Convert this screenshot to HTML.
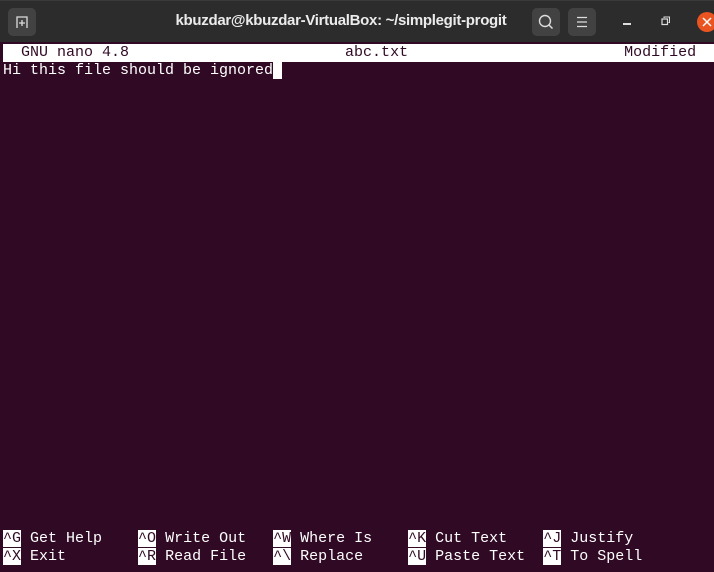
<!DOCTYPE html>
<html><head><style>
html,body{margin:0;padding:0;width:714px;height:572px;overflow:hidden;background:#300a24}
.hdr{position:absolute;left:0;top:0;width:714px;height:42px;background:#2c2c2c;border-top:1px solid #3a3a3a;box-sizing:border-box}
.btn{position:absolute;top:7px;width:28px;height:28px;background:#424242;border-radius:5px}
.title{position:absolute;top:11px;left:168px;width:346px;text-align:center;font:bold 15px "Liberation Sans",sans-serif;color:#ececec;letter-spacing:-0.3px;white-space:nowrap}
.t{position:absolute;font:15px/18px "Liberation Mono",monospace;white-space:pre;color:#fff}
.bar{position:absolute;left:3px;top:44px;width:711px;height:18px;background:#fff;color:#300a24}
.k{background:#fff;color:#300a24}
</style></head><body>
<div class="hdr">
<div class="btn" style="left:8px"><svg width="28" height="28" viewBox="0 0 28 28"><path d="M9 20V9h10v11" fill="none" stroke="#ddd" stroke-width="1.3"/><path d="M14 12v6M11 15h6" stroke="#ddd" stroke-width="1.3"/></svg></div>
<div class="title">kbuzdar@kbuzdar-VirtualBox: ~/simplegit-progit</div>
<div class="btn" style="left:532px"><svg width="28" height="28" viewBox="0 0 28 28"><circle cx="13" cy="13" r="5.5" fill="none" stroke="#ddd" stroke-width="1.4"/><path d="M17 17l3.5 3.5" stroke="#ddd" stroke-width="1.5"/></svg></div>
<div class="btn" style="left:568px"><svg width="28" height="28" viewBox="0 0 28 28"><path d="M9 9.5h10M9 14h10M9 18.5h10" stroke="#ddd" stroke-width="1.3"/></svg></div>
<div style="position:absolute;left:623px;top:22px;width:8px;height:1.5px;background:#ddd"></div>
<svg style="position:absolute;left:660px;top:14px" width="12" height="12" viewBox="0 0 12 12"><rect x="2" y="4" width="5.5" height="5.5" fill="none" stroke="#ddd" stroke-width="1.2"/><path d="M4 3V2h5.5v5.5H8.5" fill="none" stroke="#ddd" stroke-width="1"/></svg>
<div style="position:absolute;left:697px;top:11px;width:20px;height:20px;border-radius:50%;background:#e95420"></div>
<svg style="position:absolute;left:701px;top:15px" width="12" height="12" viewBox="0 0 12 12"><path d="M2 2l8 8M10 2l-8 8" stroke="#fff" stroke-width="1.5"/></svg>
</div>
<div class="t bar">  GNU nano 4.8                        abc.txt                        Modified</div>
<div class="t" style="left:3px;top:62px">Hi this file should be ignored<span class="k"> </span></div>
<div class="t" style="left:3px;top:530px"><span class="k">^G</span> Get Help    <span class="k">^O</span> Write Out   <span class="k">^W</span> Where Is    <span class="k">^K</span> Cut Text    <span class="k">^J</span> Justify</div>
<div class="t" style="left:3px;top:548px"><span class="k">^X</span> Exit        <span class="k">^R</span> Read File   <span class="k">^\</span> Replace     <span class="k">^U</span> Paste Text  <span class="k">^T</span> To Spell</div>
</body></html>
